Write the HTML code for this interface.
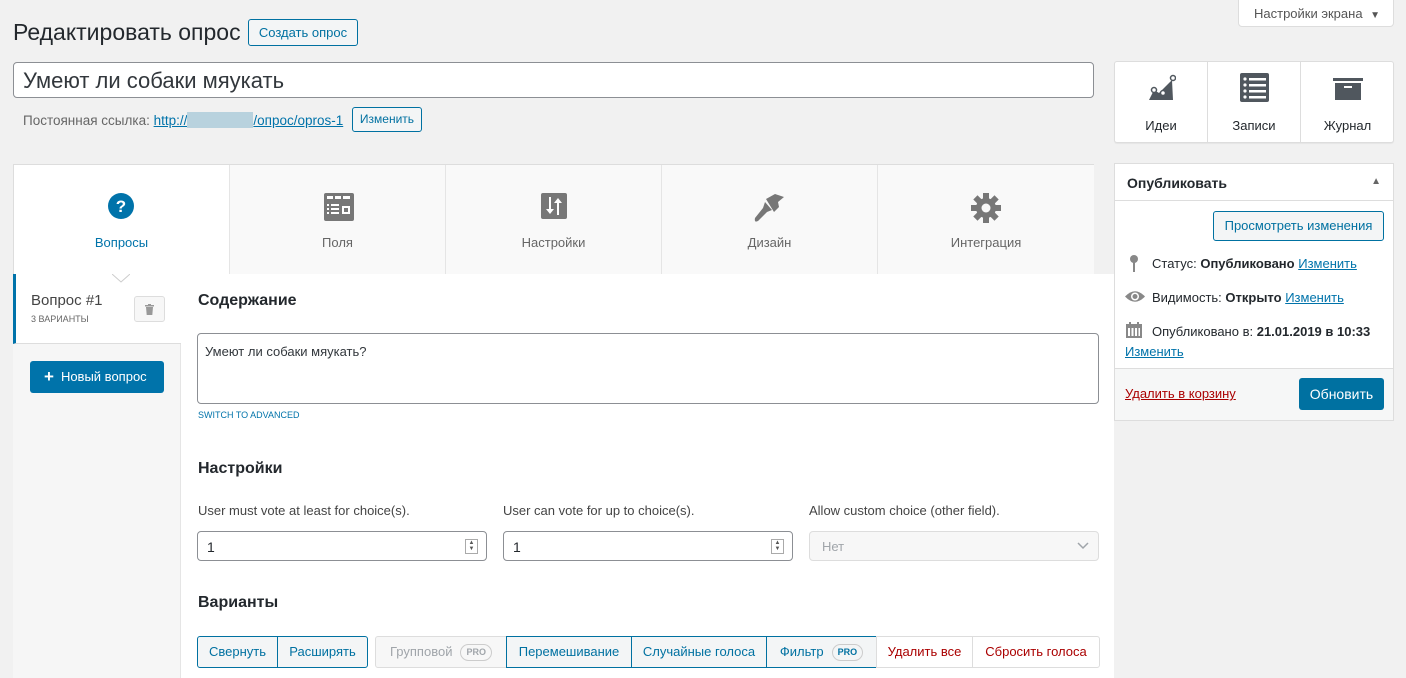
<!DOCTYPE html>
<html><head><meta charset="utf-8"><style>
*{box-sizing:border-box;margin:0;padding:0}
body{width:1406px;height:678px;overflow:hidden;background:#f1f1f1;font-family:"Liberation Sans","Noto Sans CJK SC",sans-serif;font-size:13px;color:#23282d;position:relative}
.a{position:absolute}
.btn{position:absolute;border:1px solid #0071a1;color:#0071a1;background:#f3f5f6;border-radius:3px;font-size:13px;text-align:center}
a{color:#0073aa;text-decoration:underline}
.tab{position:absolute;top:0;width:216px;height:109px;border-right:1px solid #e5e5e5;background:#f9f9f9;text-align:center;color:#666}
.tab .lbl{position:absolute;top:70px;left:0;right:0;font-size:13px}
.tab svg{position:absolute;top:28px;left:94px}
.inp{position:absolute;top:531px;height:30px;border:1px solid #8c8f94;border-radius:4px;background:#fff;padding:7px 9px;font-size:14px}
.g{position:absolute;top:636px;height:32px;border:1px solid #0071a1;background:#f3f5f6;color:#0071a1;font-size:13px;line-height:30px;text-align:center}
.pro{display:inline-block;border:1px solid #ccc;border-radius:10px;font-size:9px;font-weight:bold;padding:2px 5px;line-height:11px;margin-left:8px;vertical-align:1px}
</style></head><body>
<div class="a" style="left:1238px;top:-1px;width:156px;height:28px;background:#fff;border:1px solid #ddd;border-radius:0 0 4px 4px;color:#555;line-height:28px;padding-left:15px">Настройки экрана <span style="font-size:10px;margin-left:4px">▼</span></div>
<div class="a" style="left:13px;top:19px;font-size:23px;color:#23282d">Редактировать опрос</div>
<div class="btn" style="left:248px;top:19px;width:110px;height:27px;line-height:25px">Создать опрос</div>
<div class="a" style="left:13px;top:62px;width:1081px;height:36px;background:#fff;border:1px solid #8c8f94;border-radius:4px;font-size:22px;padding:5px 9px;color:#32373c">Умеют ли собаки мяукать</div>
<div class="a" style="left:23px;top:112px;color:#666;font-size:13.5px">Постоянная ссылка: <a>http://</a><span style="display:inline-block;width:66px;height:16px;background:#b8d2de;vertical-align:-3px"></span><a>/опрос/opros-1</a></div>
<div class="btn" style="left:352px;top:107px;width:70px;height:25px;line-height:23px;font-size:12px">Изменить</div>

<div class="a" style="left:1114px;top:61px;width:280px;height:82px;background:#fff;border:1px solid #ddd;border-radius:3px;box-shadow:0 1px 1px rgba(0,0,0,.05)">
 <div class="a" style="left:0;top:0;width:93px;height:80px;border-right:1px solid #ddd;text-align:center">
  <svg class="a" style="left:33px;top:12px" width="28" height="28" viewBox="0 0 28 28"><path d="M1 26 L6 16 L11 19 L18 12 L24 6 L25 26Z" fill="#50575e"/><circle cx="6" cy="16" r="2.5" fill="#fff" stroke="#50575e" stroke-width="1.5"/><circle cx="15" cy="19" r="2.5" fill="#fff" stroke="#50575e" stroke-width="1.5"/><circle cx="25" cy="4" r="2.5" fill="#fff" stroke="#50575e" stroke-width="1.5"/></svg>
  <div class="a" style="top:56px;left:0;right:0">Идеи</div></div>
 <div class="a" style="left:93px;top:0;width:93px;height:80px;border-right:1px solid #ddd;text-align:center">
  <svg class="a" style="left:32px;top:11px" width="30" height="30" viewBox="0 0 30 30"><rect x="0" y="0" width="29" height="29" rx="2" fill="#50575e"/><g fill="#fff"><circle cx="5" cy="6" r="1.6"/><circle cx="5" cy="12" r="1.6"/><circle cx="5" cy="18" r="1.6"/><circle cx="5" cy="24" r="1.6"/><rect x="9" y="5" width="17" height="2.5"/><rect x="9" y="11" width="17" height="2.5"/><rect x="9" y="17" width="17" height="2.5"/><rect x="9" y="23" width="17" height="2.5"/></g></svg>
  <div class="a" style="top:56px;left:0;right:0">Записи</div></div>
 <div class="a" style="left:186px;top:0;width:93px;height:80px;text-align:center">
  <svg class="a" style="left:32px;top:16px" width="30" height="22" viewBox="0 0 30 22"><rect x="0" y="0" width="30" height="3" fill="#50575e"/><rect x="2" y="5" width="26" height="17" fill="#50575e"/><rect x="11" y="8" width="8" height="2" fill="#fff"/></svg>
  <div class="a" style="top:56px;left:0;right:0">Журнал</div></div>
</div>

<div class="a" style="left:1114px;top:163px;width:280px;height:258px;background:#fff;border:1px solid #ddd">
 <div class="a" style="left:0;top:0;width:278px;height:37px;border-bottom:1px solid #ddd;font-size:14px;font-weight:bold;padding:11px 12px">Опубликовать<span style="position:absolute;right:12px;top:12px;font-size:10px;color:#666">▲</span></div>
 <div class="btn" style="left:98px;top:47px;width:171px;height:30px;line-height:28px">Просмотреть изменения</div>
 <svg class="a" style="left:14px;top:91px" width="10" height="17" viewBox="0 0 10 17"><circle cx="5" cy="4" r="4" fill="#888"/><rect x="4" y="6" width="2" height="11" fill="#888"/></svg>
 <div class="a" style="left:37px;top:92px">Статус: <b>Опубликовано</b> <a>Изменить</a></div>
 <svg class="a" style="left:10px;top:126px" width="20" height="13" viewBox="0 0 20 13"><path d="M0 6.5 Q10 -4 20 6.5 Q10 17 0 6.5Z" fill="#888"/><circle cx="10" cy="6.5" r="4" fill="#fff"/><circle cx="10" cy="6.5" r="2.5" fill="#888"/></svg>
 <div class="a" style="left:37px;top:126px">Видимость: <b>Открыто</b> <a>Изменить</a></div>
 <svg class="a" style="left:11px;top:158px" width="16" height="16" viewBox="0 0 16 16"><rect x="0" y="2" width="16" height="14" fill="#888"/><rect x="2" y="6" width="12" height="8" fill="#fff"/><g fill="#888"><rect x="4" y="6" width="1.5" height="8"/><rect x="7.5" y="6" width="1.5" height="8"/><rect x="11" y="6" width="1.5" height="8"/></g><rect x="3" y="0" width="2" height="4" fill="#888"/><rect x="11" y="0" width="2" height="4" fill="#888"/></svg>
 <div class="a" style="left:37px;top:160px">Опубликовано в: <b>21.01.2019 в 10:33</b></div>
 <div class="a" style="left:10px;top:180px"><a>Изменить</a></div>
 <div class="a" style="left:0;top:204px;width:278px;height:52px;background:#f6f7f7;border-top:1px solid #ddd"></div>
 <div class="a" style="left:10px;top:222px"><a style="color:#a00">Удалить в корзину</a></div>
 <div class="a" style="left:184px;top:214px;width:85px;height:32px;background:#0071a1;border-radius:3px;color:#fff;font-size:14px;text-align:center;line-height:32px">Обновить</div>
</div>

<div class="a" style="left:13px;top:164px;width:1081px;height:110px;border:1px solid #ddd;border-bottom:1px solid #ccc;background:#f9f9f9">
 <div class="tab" style="left:0;background:#fff;color:#0073aa"><svg width="26" height="26" viewBox="0 0 26 26"><circle cx="13" cy="13" r="13" fill="#0073aa"/><text x="13" y="19" text-anchor="middle" font-family="Liberation Sans" font-weight="bold" font-size="17" fill="#fff">?</text></svg><div class="lbl">Вопросы</div></div>
 <div class="tab" style="left:216px"><svg width="30" height="28" viewBox="0 0 30 28"><rect width="30" height="28" rx="2" fill="#777"/><g fill="#fff"><rect x="3" y="3" width="6" height="3"/><rect x="11" y="3" width="6" height="3"/><rect x="19" y="3" width="7" height="3"/><rect x="3" y="11" width="2" height="2"/><rect x="7" y="11" width="8" height="2"/><rect x="3" y="15" width="2" height="2"/><rect x="7" y="15" width="8" height="2"/><rect x="3" y="19" width="2" height="2"/><rect x="7" y="19" width="8" height="2"/><rect x="18" y="13" width="8" height="8"/></g><rect x="20" y="15" width="4" height="4" fill="#777"/></svg><div class="lbl">Поля</div></div>
 <div class="tab" style="left:432px"><svg width="26" height="26" viewBox="0 0 26 26" style="left:95px"><rect width="26" height="26" rx="2" fill="#777"/><g fill="#fff"><rect x="8" y="4" width="2" height="14"/><path d="M5 16h8l-4 5z"/><rect x="16" y="8" width="2" height="14"/><path d="M13 10h8l-4-5z"/></g></svg><div class="lbl">Настройки</div></div>
 <div class="tab" style="left:648px"><svg width="32" height="30" viewBox="0 0 32 30" style="left:91px"><path d="M13 6 L22 1 L31 4 L25 9 L26 14 L21 19Z" fill="#777"/><path d="M12 9 L19 17 L14 19 L5 28 Q1 30 2 25 L10 15Z" fill="#777"/></svg><div class="lbl">Дизайн</div></div>
 <div class="tab" style="left:864px;border-right:none"><svg width="30" height="30" viewBox="0 0 30 30" style="left:93px"><g fill="#777"><circle cx="15" cy="15" r="10"/><g id="t"><rect x="12" y="0" width="6" height="30"/><rect x="0" y="12" width="30" height="6"/></g><use href="#t" transform="rotate(45 15 15)"/></g><circle cx="15" cy="15" r="4.5" fill="#f9f9f9"/></svg><div class="lbl">Интеграция</div></div>
</div>

<div class="a" style="left:13px;top:274px;width:168px;height:404px;background:#f6f6f6;border-right:1px solid #e5e5e5"></div>
<div class="a" style="left:181px;top:274px;width:933px;height:404px;background:#fff"></div>
<div class="a" style="left:13px;top:274px;width:168px;height:70px;background:#fff;border-left:3px solid #0073aa;border-bottom:1px solid #ddd"></div>
<svg class="a" style="left:112px;top:273px" width="18" height="10" viewBox="0 0 18 10"><path d="M0 1 L9 9 L18 1" fill="#fff" stroke="#ccc" stroke-width="1"/><rect x="0" y="0" width="18" height="1" fill="#fff"/></svg>
<div class="a" style="left:31px;top:292px;font-size:15px;color:#444">Вопрос #1</div>
<div class="a" style="left:31px;top:314px;font-size:9px;color:#666">3 ВАРИАНТЫ</div>
<div class="a" style="left:134px;top:296px;width:31px;height:26px;border:1px solid #ddd;border-radius:3px;background:#f7f7f7;color:#888;text-align:center;line-height:24px;font-size:11px"><svg width="9" height="11" viewBox="0 0 9 11" style="margin-top:7px"><rect x="0" y="1" width="9" height="1.5" fill="#999"/><rect x="3" y="0" width="3" height="1" fill="#999"/><path d="M1 3h7l-.7 8h-5.6z" fill="#999"/></svg></div>
<div class="a" style="left:30px;top:361px;width:134px;height:32px;background:#0073aa;border-radius:3px;color:#fff;font-size:13px;line-height:32px;padding-left:14px"><b style="font-size:17px;vertical-align:-1px;margin-right:7px">+</b>Новый вопрос</div>

<div class="a" style="left:198px;top:292px;font-size:16px;font-weight:bold;color:#23282d">Содержание</div>
<div class="a" style="left:197px;top:333px;width:902px;height:71px;border:1px solid #8c8f94;border-radius:4px;padding:10px 7px;font-size:13px;color:#32373c">Умеют ли собаки мяукать?</div>
<div class="a" style="left:198px;top:410px;font-size:9px;color:#0073aa">SWITCH TO ADVANCED</div>
<div class="a" style="left:198px;top:460px;font-size:16px;font-weight:bold">Настройки</div>
<div class="a" style="left:198px;top:503px;color:#444">User must vote at least for choice(s).</div>
<div class="a" style="left:503px;top:503px;color:#444">User can vote for up to choice(s).</div>
<div class="a" style="left:809px;top:503px;color:#444">Allow custom choice (other field).</div>
<div class="inp" style="left:197px;width:290px">1<span style="position:absolute;right:8px;top:7px;width:13px;height:15px;border:1px solid #aaa;font-size:6px;line-height:6px;color:#555;text-align:center">▲<br>▼</span></div>
<div class="inp" style="left:503px;width:290px">1<span style="position:absolute;right:8px;top:7px;width:13px;height:15px;border:1px solid #aaa;font-size:6px;line-height:6px;color:#555;text-align:center">▲<br>▼</span></div>
<div class="inp" style="left:809px;width:290px;background:#f7f7f7;border-color:#ddd;color:#a0a5aa;font-size:13px;padding-left:12px">Нет<svg style="position:absolute;right:9px;top:10px" width="12" height="8" viewBox="0 0 12 8"><path d="M1 1l5 5 5-5" stroke="#a0a5aa" stroke-width="1.5" fill="none"/></svg></div>
<div class="a" style="left:198px;top:594px;font-size:16px;font-weight:bold">Варианты</div>

<div class="g" style="left:197px;width:81px;border-radius:3px 0 0 3px">Свернуть</div>
<div class="g" style="left:277px;width:91px;border-radius:0 3px 3px 0">Расширять</div>
<div class="g" style="left:375px;width:132px;border-color:#ddd;color:#a0a5aa;background:#f7f7f7;border-radius:3px 0 0 3px">Групповой<span class="pro">PRO</span></div>
<div class="g" style="left:506px;width:126px">Перемешивание</div>
<div class="g" style="left:631px;width:136px">Случайные голоса</div>
<div class="g" style="left:766px;width:111px">Фильтр<span class="pro" style="color:#0071a1">PRO</span></div>
<div class="g" style="left:876px;width:97px;border-color:#ddd;background:#fff;color:#a00">Удалить все</div>
<div class="g" style="left:972px;width:128px;border-color:#ddd;background:#fff;color:#a00;border-radius:0 3px 3px 0">Сбросить голоса</div>
</body></html>
